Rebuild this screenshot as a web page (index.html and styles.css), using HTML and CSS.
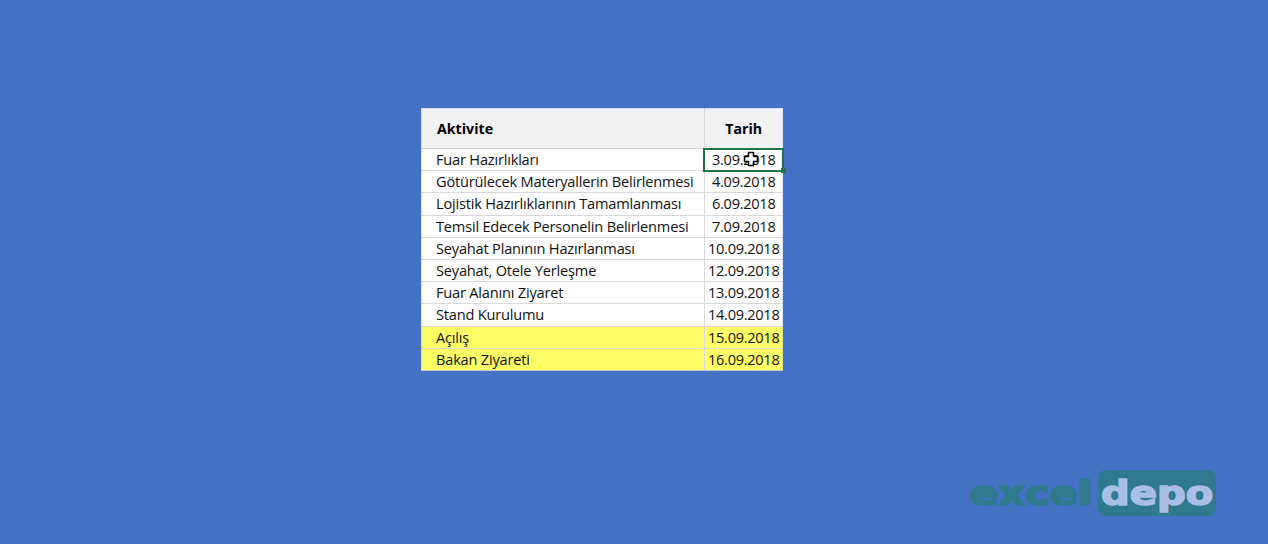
FILE: index.html
```html
<!DOCTYPE html>
<html lang="tr">
<head>
<meta charset="utf-8">
<title>Aktivite</title>
<link rel="stylesheet" href="styles.css">
</head>
<body>
<main class="page">
  <div class="sheet">
    <div class="cell head name">Aktivite</div><div class="cell head date">Tarih</div>
    <div class="cell name">Fuar Hazırlıkları</div>
    <div class="cell date selected">3.09.2018
      <span class="handle"></span>
      <svg class="cursor" viewBox="0 0 16 16" width="16" height="16"><path d="M5.5 1.5h5v4h4v5h-4v4h-5v-4h-4v-5h4z" fill="#fff" stroke="#000" stroke-width="1.5" stroke-linejoin="round"/></svg>
    </div>
    <div class="cell name">Götürülecek Materyallerin Belirlenmesi</div><div class="cell date">4.09.2018</div>
    <div class="cell name">Lojistik Hazırlıklarının Tamamlanması</div><div class="cell date">6.09.2018</div>
    <div class="cell name">Temsil Edecek Personelin Belirlenmesi</div><div class="cell date">7.09.2018</div>
    <div class="cell name">Seyahat Planının Hazırlanması</div><div class="cell date">10.09.2018</div>
    <div class="cell name">Seyahat, Otele Yerleşme</div><div class="cell date">12.09.2018</div>
    <div class="cell name">Fuar Alanını Ziyaret</div><div class="cell date">13.09.2018</div>
    <div class="cell name">Stand Kurulumu</div><div class="cell date">14.09.2018</div>
    <div class="cell name hl">Açılış</div><div class="cell date hl">15.09.2018</div>
    <div class="cell name hl">Bakan Ziyareti</div><div class="cell date hl">16.09.2018</div>
  </div>
  <div class="logo"><span class="excel"><span class="word">excel</span></span><span class="depo"><span class="word">depo</span></span></div>
</main>
</body>
</html>
```
FILE: styles.css
```css
* { box-sizing: border-box; }
html, body { margin: 0; height: 100%; }
body { background: #4472c4; overflow: hidden; }
.page {
  height: 544px;
  padding: 108px 52px 28px 421px;
  display: flex;
  flex-direction: column;
  justify-content: space-between;
}
.sheet {
  width: 361.5px;
  display: grid;
  grid-template-columns: 283px 78.5px;
  grid-template-rows: 41px repeat(10, 22.2px);
  font-family: "Open Sans", sans-serif;
  font-size: 14.6px;
  letter-spacing: -0.2px;
  color: #111;
  background: #fff;
  position: relative;
}
.sheet::after {
  content: "";
  position: absolute;
  inset: 0;
  border: 1px solid rgba(68, 114, 196, .15);
  pointer-events: none;
}
.cell {
  display: flex;
  align-items: center;
  padding-bottom: 1px;
  border-bottom: 1px solid #d9d9d9;
  white-space: nowrap;
  position: relative;
}
.name { padding-left: 15px; }
.date { justify-content: center; border-left: 1px solid #d9d9d9; letter-spacing: -0.3px; }
.head { background: #f2f2f2; font-weight: 700; color: #000; border-bottom-color: #d4d4d4; font-size: 14.2px; letter-spacing: 0; padding-bottom: 0; }
.head.name { padding-left: 16px; }
.hl { background: #ffff66; }
.selected { outline: 2px solid #217346; outline-offset: -1px; z-index: 1; }
.handle {
  position: absolute;
  right: -3px;
  bottom: -3px;
  width: 5px;
  height: 5px;
  background: #217346;
}
.cursor { position: absolute; left: 38px; top: 2px; }
.logo {
  align-self: flex-end;
  display: flex;
  align-items: flex-start;
  font-family: "DejaVu Sans", sans-serif;
  font-weight: 700;
  font-size: 34px;
  line-height: 46px;
  height: 46px;
}
.word { display: inline-block; transform: scaleX(1.18); transform-origin: left center; -webkit-text-stroke: 1.6px currentColor; }
.excel { color: #2f7a8c; width: 128px; }
.excel .word { transform: scaleX(1.22); -webkit-text-stroke-width: 2px; }
.depo {
  width: 118px;
  height: 46px;
  padding-left: 3px;
  border-radius: 8px;
  background: #2f7a8c;
  color: #a9bfe3;
}
```
